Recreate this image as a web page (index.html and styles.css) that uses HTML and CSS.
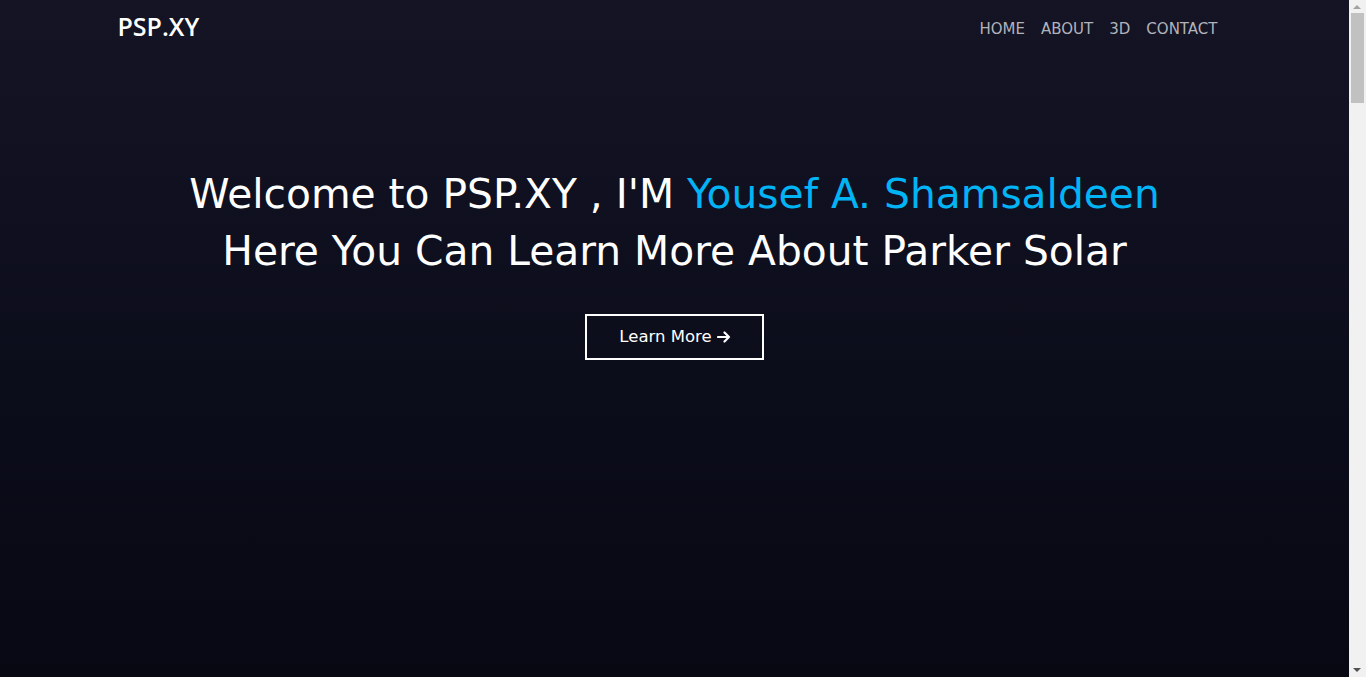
FILE: index.html
```html
<!DOCTYPE html>
<html lang="en">
<head>
<meta charset="utf-8">
<title>PSP.XY</title>
<link rel="stylesheet" href="styles.css">
</head>
<body>
<div class="page">
  <header class="navbar">
    <div class="container nav-inner">
      <a class="brand" href="#">PSP.XY</a>
      <nav class="nav-links">
        <a href="#">HOME</a>
        <a href="#about">ABOUT</a>
        <a href="#model">3D</a>
        <a href="#contact">CONTACT</a>
      </nav>
    </div>
  </header>
  <main>
    <section class="hero">
      <h1 class="hero-title">Welcome to PSP.XY , I'M <span class="accent">Yousef A. Shamsaldeen</span><br>Here You Can Learn More About Parker Solar</h1>
      <a class="btn-outline" href="#about">Learn More <svg class="arrow" viewBox="0 0 14 12" width="14" height="12"><path d="M1 6H12M7.5 1.5L12 6L7.5 10.5" fill="none" stroke="#fff" stroke-width="2.2" stroke-linecap="round" stroke-linejoin="round"/></svg></a>
    </section>
    <section class="section" id="about"></section>
    <section class="section" id="model"></section>
    <section class="section" id="contact"></section>
  </main>
</div>
<div class="scrollbar" aria-hidden="true">
  <span class="sb-up"></span>
  <span class="sb-thumb"></span>
  <span class="sb-down"></span>
</div>
</body>
</html>
```
FILE: styles.css
```css
html, body {
  margin: 0;
  padding: 0;
}
body {
  background: #070812;
  color: #fff;
  font-family: "DejaVu Sans", sans-serif;
}
a {
  text-decoration: none;
  color: inherit;
}
.page {
  margin-right: 17px;
  position: relative;
}
.navbar {
  position: absolute;
  top: 0;
  left: 0;
  right: 0;
  z-index: 2;
}
.container {
  box-sizing: border-box;
  max-width: 1140px;
  margin: 0 auto;
  padding: 0 12px;
}
.nav-inner {
  height: 56px;
  display: flex;
  align-items: center;
  justify-content: space-between;
}
.brand {
  font-family: "Open Sans", sans-serif;
  font-weight: 600;
  font-size: 25px;
  color: #fff;
  margin-left: 1px;
  margin-top: -4px;
}
.nav-links {
  display: flex;
  margin-right: 3px;
  margin-top: 2px;
}
.nav-links a {
  font-size: 15px;
  color: #b2b2ba;
  padding: 0 8px;
}
.nav-links a:last-child {
  padding-right: 12px;
}
.hero {
  min-height: 677px;
  box-sizing: border-box;
  padding-top: 166px;
  display: flex;
  flex-direction: column;
  align-items: center;
  background: linear-gradient(180deg, #141425 0%, #0c0d1b 55%, #070812 100%);
}
.hero-title {
  margin: 0;
  font-weight: 400;
  font-size: 40.75px;
  line-height: 57px;
  text-align: center;
}
.accent {
  color: #00b4f5;
}
.btn-outline {
  margin-top: 34px;
  display: inline-flex;
  align-items: center;
  gap: 5px;
  border: 2px solid #fff;
  padding: 11px 31px 11px 32px;
  font-size: 16.5px;
  line-height: 20px;
  color: #fff;
}
.arrow {
  display: block;
}
.section {
  min-height: 1390px;
}
.scrollbar {
  position: fixed;
  top: 0;
  right: 0;
  bottom: 0;
  width: 17px;
  background: #f1f1f1;
  z-index: 10;
}
.sb-up, .sb-down {
  position: absolute;
  left: 4px;
  width: 0;
  height: 0;
  border-left: 4px solid transparent;
  border-right: 4px solid transparent;
}
.sb-up {
  top: 5px;
  border-bottom: 4px solid #a3a3a3;
}
.sb-down {
  bottom: 5px;
  border-top: 4px solid #505050;
}
.sb-thumb {
  position: absolute;
  top: 13px;
  left: 2px;
  width: 13px;
  height: 90px;
  background: #c1c1c1;
}
```
